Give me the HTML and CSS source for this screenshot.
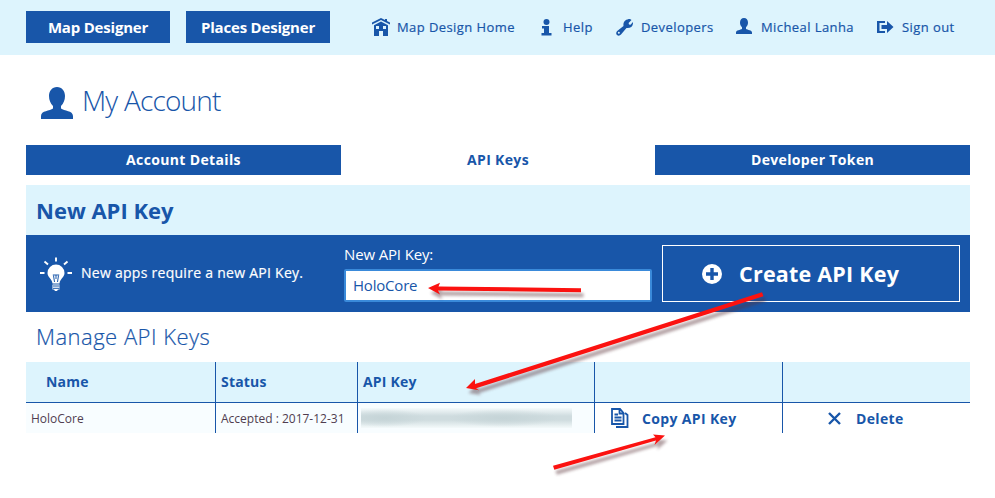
FILE: index.html
```
<!DOCTYPE html>
<html lang="en">
<head>
<meta charset="utf-8">
<title>My Account</title>
<link rel="stylesheet" href="styles.css">
</head>
<body>
<header class="topbar">
  <a class="app-btn">Map Designer</a>
  <a class="app-btn">Places Designer</a>
  <nav class="nav">
    <a class="nav-item"><svg class="ico" width="18" height="18" viewBox="0 0 18 18"><path d="M9 0 0 4.500v2L9 2l9 4.500v-2l-3-1.500V1h-2v1zM9 3.500 2 7.300V18h5v-5h4v5h5V7.300zM4 8h3v3H4zm7 0h3v3h-3z" fill-rule="evenodd"/></svg><span>Map Design Home</span></a>
    <a class="nav-item help"><svg class="ico" width="11" height="17" viewBox="0 0 11 17"><circle cx="5.500" cy="3" r="3"/><path d="M1 7h7v7h2.500v2.500H.500V14H3V9.500H1z"/></svg><span>Help</span></a>
    <a class="nav-item"><svg class="ico" width="17" height="17" viewBox="0 0 17 17"><path d="M15.500 1 12.600 4l.4 1.500 1.500.2L17 3c.4 4-2.500 6.600-6.500 6L5 15.500c-1 1.200-2.700 1.600-4 .5-1.200-1.100-1-2.800.2-4L7.500 7C6.800 2.500 10 0 14 0zM2.800 12.800a1 1 0 1 0 .1 2 1 1 0 0 0-.1-2z" fill-rule="evenodd"/></svg><span>Developers</span></a>
    <a class="nav-item"><svg class="ico person" width="16" height="16" viewBox="0 0 32 32"><path d="M16 0c-5 0-8 4-8 9 0 4 1.500 7 4 9.500V22c-3 2-12 2-12 7v3h32v-3c0-5-9-5-12-7v-3.500c2.500-2.500 4-5.500 4-9.500 0-5-3-9-8-9z"/></svg><span>Micheal Lanha</span></a>
    <a class="nav-item"><svg class="ico" width="17" height="13" viewBox="0 0 17 13"><path d="M8 0H0v12h8v-2H2.500V2H8zM4.500 4H10V0l6.500 6L10 12V8H4.500z"/></svg><span>Sign out</span></a>
  </nav>
</header>
<main class="page">
  <h1 class="title"><svg class="title-ico" width="32" height="32" viewBox="0 0 32 32"><path d="M16 0c-5 0-8 4-8 9 0 4 1.500 7.500 4 10v2.500C9 24 0 23.500 0 29v3h32v-3c0-5.500-9-5-12-7.500V19c2.500-2.500 4-6 4-10 0-5-3-9-8-9z"/></svg><span>My Account</span></h1>
  <div class="tabs">
    <a class="tab">Account Details</a>
    <a class="tab active">API Keys</a>
    <a class="tab">Developer Token</a>
  </div>
  <h2 class="section-head">New API Key</h2>
  <section class="panel">
    <div class="hint"><svg class="bulb" width="32" height="34" viewBox="0 0 32 34"><path d="M16 7.500A8.500 8.500 0 0 0 7.500 16c0 4.500 4.500 5.500 5 10.500h7c.5-5 5-6 5-10.500A8.500 8.500 0 0 0 16 7.500zM12.500 27.500h7v5h-1.500l-1 1.500h-2l-1-1.500h-1.500z" fill="#fff"/><path d="M12.800 18h6.400M13.500 18.500l1 6.500M18.500 18.500l-1 6.500M16 18v4M13 29h6.500M13 31.300h6.500" stroke="#1856a9" fill="none"/><path d="M16 .500v4M4.500 4.500l3.500 3M27.500 4.500l-3.500 3M0 16h4.500M27.500 16H32" stroke="#fff" stroke-width="1.900"/></svg><span>New apps require a new API Key.</span></div>
    <label class="field"><span>New API Key:</span><input type="text" value="HoloCore"></label>
    <button class="create"><svg width="20" height="20" viewBox="0 0 20 20"><circle cx="10" cy="10" r="10" fill="#fff"/><path d="M10 4v12M4 10h12" stroke="#1856a9" stroke-width="3.400"/></svg><span>Create API Key</span></button>
  </section>
  <h2 class="manage">Manage API Keys</h2>
  <div class="table">
    <div class="th first">Name</div><div class="th">Status</div><div class="th">API Key</div><div class="th"></div><div class="th"></div>
    <div class="td">HoloCore</div>
    <div class="td">Accepted : 2017-12-31</div>
    <div class="td"><span class="masked"></span></div>
    <div class="td action copy"><svg width="18" height="20" viewBox="0 0 18 20"><path d="M1 1h8l3.500 4v11H1zM8.500 1v4.500h4M14 5l2.500 2v12H5M3.500 6.500h3.500M3.500 9.500h7M3.500 12.500h7" fill="none" stroke="#1856a9" stroke-width="1.800"/></svg><span>Copy API Key</span></div>
    <div class="td action delete"><svg width="13" height="13" viewBox="0 0 13 13"><path d="M1 1l11 11M12 1 1 12" stroke="#1856a9" stroke-width="2.400"/></svg><span>Delete</span></div>
  </div>
</main>
<svg class="arrows" width="995" height="498" viewBox="0 0 995 498">
  <defs><filter id="soft" x="-10%" y="-40%" width="120%" height="200%"><feGaussianBlur stdDeviation="1.500"/></filter>
  <g id="marks"><path d="M581 288.200v4L438 290.400l2 4-12-6.400 12-5.200-1.500 3.600z"/><path d="M762 292.300l1.500 4L476 388.300l3 2-13-2.300 9-9v5z"/><path d="M553 465.800l1.300 4L656 440.500l-1.500 4.500 10.500-9.500-12-1 2.500 2.800z"/></g></defs>
  <use href="#marks" class="shadow" filter="url(#soft)" x="2.500" y="5"/>
  <use href="#marks" class="mark"/>
</svg>
</body>
</html>
```
FILE: styles.css
```
* { box-sizing: border-box; }
body { margin: 0; width: 995px; height: 498px; overflow: hidden; background: #fff; color: #1856a9; font-family: "Open Sans", sans-serif; position: relative; }
svg { display: block; flex: none; }
h1, h2 { margin: 0; }
.topbar { height: 55px; background: #ddf4fd; display: flex; align-items: flex-start; padding: 11px 0 0 26px; }
.app-btn { width: 144px; height: 32px; margin-right: 16px; background: #1856a9; color: #fff; font-size: 15px; font-weight: 700; line-height: 33px; letter-spacing: -.2px; text-align: center; }
.nav { display: grid; grid-template-columns: 169px 75px 120px 141px 100px; margin-left: 26px; height: 32px; align-items: center; font-size: 13px; letter-spacing: .42px; white-space: nowrap; -webkit-text-stroke: .2px #1856a9; }
.nav-item { display: grid; grid-template-columns: 25px auto; align-items: center; height: 32px; }
.nav-item.help { grid-template-columns: 22px auto; }
.ico, .title-ico { fill: #1856a9; }
.person { margin-top: -2px; }
.page { padding: 0 25px 0 26px; }
.title { height: 90px; padding: 31px 0 0 15px; display: flex; gap: 9px; font-size: 28px; font-weight: 300; line-height: 28px; letter-spacing: -.8px; }
.title-ico { margin-top: 1px; }
.tabs { display: grid; grid-template-columns: 315px 314px 315px; height: 30px; font-size: 14px; font-weight: 700; line-height: 30px; letter-spacing: .35px; text-align: center; }
.tab { background: #1856a9; color: #fff; }
.tab.active { background: #fff; color: #1856a9; }
.section-head { margin-top: 10px; height: 50px; padding-left: 10px; background: #ddf4fd; font-size: 22px; line-height: 50px; }
.panel { height: 77px; background: #1856a9; color: #fff; display: grid; grid-template-columns: 308px 308px 298px; column-gap: 10px; padding-right: 10px; }
.hint { display: flex; align-items: center; gap: 9px; padding-left: 14px; font-size: 14px; letter-spacing: .27px; white-space: nowrap; -webkit-text-stroke: .2px #fff; }
.hint span { margin-top: -2px; }
.bulb { margin-top: 1px; }
.field { padding-top: 9px; font-size: 15px; line-height: 20px; letter-spacing: -.15px; }
.field span { display: block; height: 25px; }
.field input { display: block; width: 308px; height: 33px; border: 2px solid #3a8ada; border-radius: 2px; padding: 0 7px 2px; background: #fff; color: #1856a9; font: 15px "Open Sans", sans-serif; letter-spacing: -.2px; outline: none; }
.create { margin: 10px 0 0; height: 57px; padding: 0 0 0 39px; border: 1px solid #fff; background: #1856a9; color: #fff; display: flex; align-items: center; gap: 17px; font: 700 21.500px "Open Sans", sans-serif; letter-spacing: .22px; white-space: nowrap; }
.manage { height: 50px; padding-left: 10px; font-size: 22px; font-weight: 300; line-height: 48px; letter-spacing: .48px; -webkit-text-stroke: .2px #1856a9; }
.table { display: grid; grid-template-columns: 189px 142px 237px 188px 188px; grid-template-rows: 41px 30px; }
.th { background: #ddf4fd; border-bottom: 1px solid #1856a9; padding-left: 5px; font-size: 14px; font-weight: 700; line-height: 39px; letter-spacing: .2px; }
.th.first { padding-left: 20px; }
.th:not(:nth-child(5n+1)), .td:not(:nth-child(5n+1)) { border-left: 1px solid #1856a9; }
.td { padding-left: 5px; display: flex; align-items: center; background: #f8fdff; color: #503d50; font-size: 12px; white-space: nowrap; }
.masked { width: 211px; height: 20px; margin-left: -2px; background: radial-gradient(ellipse 42px 9px at 23px 10px, #c5d4d7, transparent), radial-gradient(ellipse 55px 9px at 142px 10px, #c5d4d7, transparent), linear-gradient(#f4fafb, #cfdcdf 40%, #cfdcdf 60%, #f4fafb); }
.td.action { background: #fff; color: #1856a9; font-size: 14px; font-weight: 700; letter-spacing: .35px; }
.td.copy { padding-left: 16px; gap: 13px; }
.td.delete { padding-left: 45px; gap: 15px; }
.arrows { position: absolute; left: 0; top: 0; }
.mark { fill: #fb1210; }
.shadow { fill: #5a3038; opacity: .45; }
```
